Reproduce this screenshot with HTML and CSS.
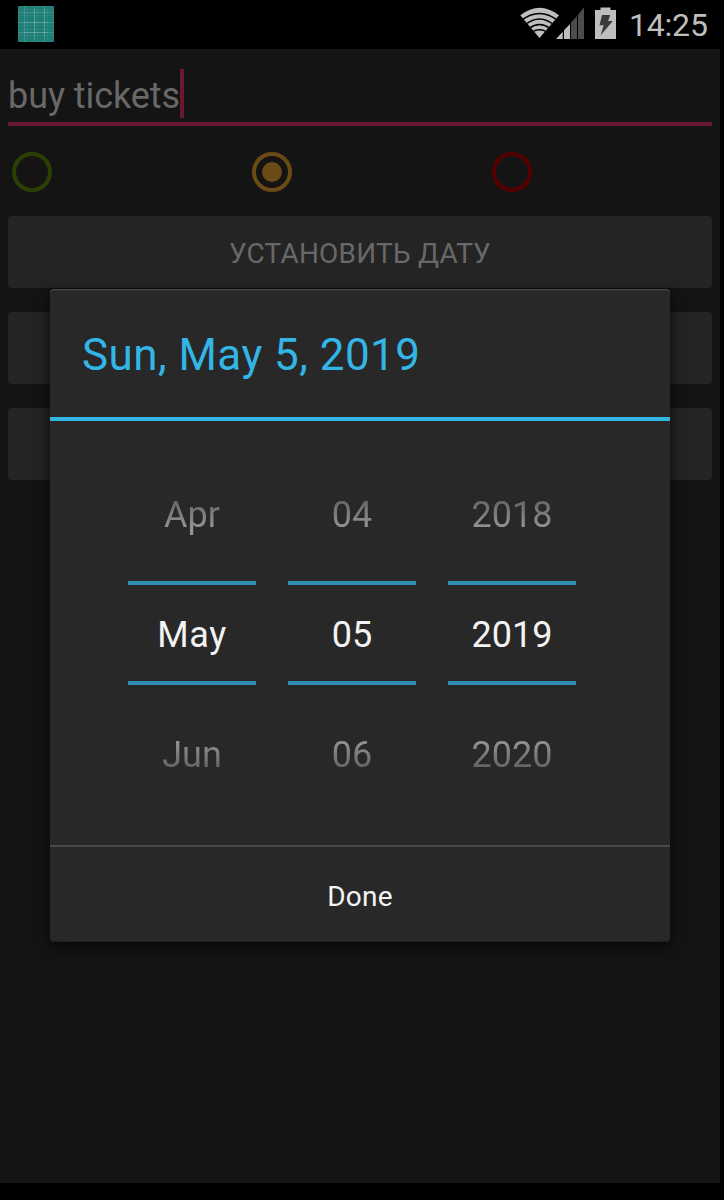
FILE: index.html
```html
<!DOCTYPE html>
<html lang="ru">
<head>
<meta charset="utf-8">
<title>Date picker</title>
<link rel="stylesheet" href="styles.css">
</head>
<body>
<header class="status">
  <svg class="app-icon" width="36" height="36" viewBox="0 0 36 36">
    <path fill="#1f7f76" d="M0 0h36v36H0z"/>
    <path stroke="#fff" stroke-opacity=".05" d="M9.500 0v36M19.500 0v36M29.500 0v36M0 3.500h36M0 9.500h36M0 19.500h36M0 23.500h36M0 29.500h36"/>
    <path stroke="#fff" stroke-opacity=".16" d="M6.500 0v36M16.500 0v36M26.500 0v36M0 6.500h36M0 16.500h36M0 26.500h36"/>
    <path stroke="#fff" stroke-opacity=".12" d="M16.500 4v26M26.500 4v26M6 16.500h24M6 26.500h24"/>
  </svg>
  <svg class="signals" width="100" height="40" viewBox="520 4 100 40">
    <defs><clipPath id="fan"><path d="M539.500 38 520.300 15.500V4h38.700v11.500z"/></clipPath></defs>
    <path fill="#bebebe" d="M539.500 38 520.300 15.300Q539.500 0.300 559 15.300z"/>
    <g clip-path="url(#fan)" fill="none" stroke="#000" stroke-width="1.500">
      <path d="M521 20.700Q539.500 6.300 558 20.700M525 24.800Q539.500 13 554 24.800M529 28.300Q539.500 20.500 550 28.300M532 32.200Q539.500 27.500 547 32.200"/>
    </g>
    <path fill="#bebebe" d="M556 39l6.700-7.200V39zM564 30.300l6-6.300V39h-6z"/>
    <path fill="#4c4c4c" d="M571 22.500l6-6.500V39h-6zM578 14.700l6-7.200V39h-6z"/>
    <path fill="#bebebe" d="M600.500 7.500h10V10h5.500v29h-21V10h5.500z"/>
    <path fill="#3c3c3c" d="M602 15h8.300l-2.200 6h4.700L600.500 35.500l3.200-10.200h-4.200z"/>
  </svg>
  <span class="clock">14:25</span>
</header>
<main class="app">
  <div class="field"><span class="value">buy tickets</span><i class="caret"></i></div>
  <div class="radios">
    <i class="radio green"></i>
    <i class="radio amber checked"></i>
    <i class="radio red"></i>
  </div>
  <div class="buttons">
    <div class="button"><span>УСТАНОВИТЬ ДАТУ</span></div>
    <div class="button"></div>
    <div class="button"></div>
  </div>
  <section class="dialog">
    <h1 class="title"><span>Sun, May 5, 2019</span></h1>
    <div class="pickers">
      <div class="picker"><div class="faded prev"><span>Apr</span></div><div class="current month"><span>May</span></div><div class="faded next"><span>Jun</span></div></div>
      <div class="picker"><div class="faded prev"><span>04</span></div><div class="current"><span>05</span></div><div class="faded next"><span>06</span></div></div>
      <div class="picker"><div class="faded prev"><span>2018</span></div><div class="current"><span>2019</span></div><div class="faded next"><span>2020</span></div></div>
    </div>
    <div class="done"><span>Done</span></div>
  </section>
</main>
</body>
</html>
```
FILE: styles.css
```css
* { box-sizing: border-box; }
body {
  margin: 0;
  height: 1200px;
  overflow: hidden;
  background: #000;
  font-family: Roboto, "Noto Sans", sans-serif;
}
.status {
  display: flex;
  align-items: flex-start;
  height: 49px;
  padding-left: 18px;
}
.app-icon { margin-top: 6px; }
.signals { margin: 4px 0 0 466px; }
.clock {
  margin: 5px 0 0 9px;
  font-size: 32px;
  line-height: 40px;
  letter-spacing: -.2px;
  color: #bebebe;
}
.app {
  position: relative;
  width: 720px;
  height: 1134px;
  padding: 20px 8px 0;
  background: #141414;
}
.field {
  display: flex;
  height: 57px;
  border-bottom: 4px solid #681a33;
  color: #686868;
  font-size: 36px;
  line-height: 55px;
  letter-spacing: -.07px;
}
.caret {
  width: 4px;
  height: 49px;
  background: #681a33;
}
.radios {
  display: grid;
  grid-template-columns: repeat(3, 240px);
  padding: 26px 4px 24px;
}
.radio {
  display: flex;
  align-items: center;
  justify-content: center;
  width: 40px;
  height: 40px;
  border: 4px solid;
  border-radius: 50%;
}
.green { color: #294000; }
.amber { color: #6b4b15; }
.red { color: #550000; }
.checked::after {
  content: "";
  width: 20px;
  height: 20px;
  flex: none;
  border-radius: 50%;
  background: currentColor;
}
.buttons { display: grid; gap: 24px; }
.button {
  height: 72px;
  border-radius: 4px;
  background: #242424;
  color: #686868;
  font-size: 28px;
  line-height: 75px;
  letter-spacing: .2px;
  text-align: center;
}
.dialog {
  position: absolute;
  left: 50px;
  top: 240px;
  width: 620px;
  height: 653px;
  border-radius: 4px;
  background: #282828;
  box-shadow: inset 0 1px #484848, inset 0 2px #323232, inset 0 -1px #202020, 0 -1px 1px #0c0c0c, 0 6px 16px rgba(0, 0, 0, .6);
}
.title {
  height: 132px;
  margin: 0;
  padding-left: 32px;
  border-bottom: 4px solid #33b5e5;
  color: #33b5e5;
  font-size: 44px;
  font-weight: 400;
  line-height: 132px;
  letter-spacing: .45px;
}
.pickers {
  display: grid;
  grid-template-columns: repeat(3, 128px);
  gap: 32px;
  height: 424px;
  padding: 40px 0 0 78px;
  font-size: 36px;
  text-align: center;
}
.picker {
  display: grid;
  grid-template-rows: 120px 104px 120px;
}
.faded { line-height: 108px; }
.faded span {
  color: transparent;
  background: linear-gradient(#696969 20%, #939393 80%);
  background-clip: text;
  -webkit-background-clip: text;
}
.next span { background-image: linear-gradient(#929292 20%, #646464 80%); }
.next { line-height: 140px; }
.current {
  border: solid #308fb1;
  border-width: 4px 0;
  color: #f3f3f3;
  line-height: 100px;
}
.month { letter-spacing: .6px; }
.done {
  height: 97px;
  border-top: 2px solid #484848;
  color: #f3f3f3;
  font-size: 28px;
  line-height: 99px;
  letter-spacing: .2px;
  text-align: center;
}
```
